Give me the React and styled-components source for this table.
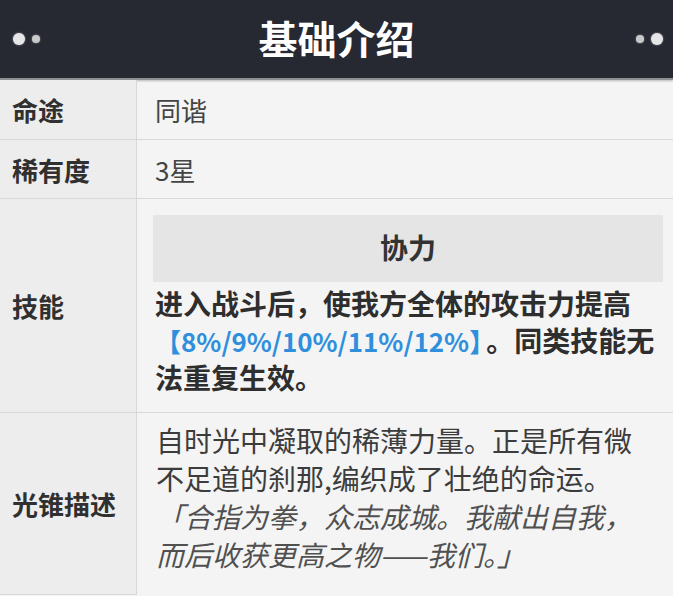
import React from 'react';
import styled, {createGlobalStyle} from 'styled-components';

const Global = createGlobalStyle`
  body {
    margin: 0;
    background: #f4f4f4;
    font-family: "Noto Sans CJK SC", "Noto Sans", sans-serif;
  }
`;

const Header = styled.header`
  height: 78px;
  background: #262932;
  display: grid;
  grid-template-columns: 1fr auto 1fr;
  align-items: center;
  border-bottom: 2px solid #8e9094;
  box-shadow: 0 1px 2px rgba(0, 0, 0, 0.25);

  h1 {
    margin: 0;
    color: #fff;
    font-size: 39px;
    font-weight: 700;
    line-height: 1;
    padding-bottom: 4px;
  }
`;

const Dots = styled.div`
  display: flex;
  align-items: center;
  gap: 7px;
  justify-self: ${p => (p.right ? 'end' : 'start')};
  padding: ${p => (p.right ? '0 10px 0 0' : '0 0 0 13px')};
  flex-direction: ${p => (p.right ? 'row-reverse' : 'row')};
`;

const Dot = styled.span`
  width: ${p => p.size}px;
  height: ${p => p.size}px;
  border-radius: 50%;
  background: #e6e6e8;
  box-shadow: 0 0 2px rgba(230, 230, 232, 0.7);
  opacity: ${p => (p.size > 10 ? 1 : 0.85)};
`;

const Table = styled.div`
  display: grid;
  grid-template-columns: 137px 1fr;
`;

const Label = styled.div`
  display: flex;
  align-items: center;
  padding-left: 12px;
  background: #ededed;
  border-right: 1px solid #d8d8d8;
  border-bottom: 1px solid #d8d8d8;
  color: #303030;
  font-size: 26px;
  font-weight: 700;
  min-height: ${p => p.h}px;
  box-sizing: border-box;
`;

const Value = styled.div`
  display: flex;
  flex-direction: column;
  justify-content: center;
  padding: ${p => p.pad || '0 20px 0 18px'};
  border-bottom: ${p => (p.last ? 'none' : '1px solid #d8d8d8')};
  color: #444;
  font-size: 26px;
  box-sizing: border-box;
  min-height: ${p => p.h}px;
`;

const SkillBox = styled.div`
  height: 67px;
  background: #e5e5e5;
  display: flex;
  align-items: center;
  justify-content: center;
  font-size: 28px;
  font-weight: 700;
  color: #333;
  padding-bottom: 2px;
  box-sizing: border-box;
`;

const SkillText = styled.p`
  margin: 3px 0 0;
  padding: 0 8px 0 2px;
  font-size: 28px;
  font-weight: 700;
  line-height: 37px;
  color: #2e2e2e;

  span {
    color: #2f8fdd;
    font-size: 26px;
    margin-right: 4px;
  }
`;

const Desc = styled.p`
  margin: 0;
  padding: 0 0 0 1px;
  font-size: 28px;
  line-height: 38px;
  color: ${p => (p.quote ? '#505050' : '#3c3c3c')};
  font-style: ${p => (p.quote ? 'italic' : 'normal')};
`;

export default function App() {
  return (
    <>
      <Global />
      <Header>
        <Dots>
          <Dot size={12} />
          <Dot size={8} />
        </Dots>
        <h1>基础介绍</h1>
        <Dots right>
          <Dot size={12} />
          <Dot size={8} />
        </Dots>
      </Header>

      <Table>
        <Label h={60}>命途</Label>
        <Value h={60}>同谐</Value>

        <Label h={59}>稀有度</Label>
        <Value h={59}>3星</Value>

        <Label h={214}>技能</Label>
        <Value h={214} pad='15px 10px 16px 16px'>
          <SkillBox>协力</SkillBox>
          <SkillText>
            进入战斗后，使我方全体的攻击力提高<span>【8%/9%/10%/11%/12%】</span>。同类技能无法重复生效。
          </SkillText>
        </Value>

        <Label h={182}>光锥描述</Label>
        <Value h={182} pad='8px 18px 22px 18px' last>
          <Desc>自时光中凝取的稀薄力量。正是所有微不足道的刹那,编织成了壮绝的命运。</Desc>
          <Desc quote>「合指为拳，众志成城。我献出自我，而后收获更高之物——我们。」</Desc>
        </Value>
      </Table>
    </>
  );
}
